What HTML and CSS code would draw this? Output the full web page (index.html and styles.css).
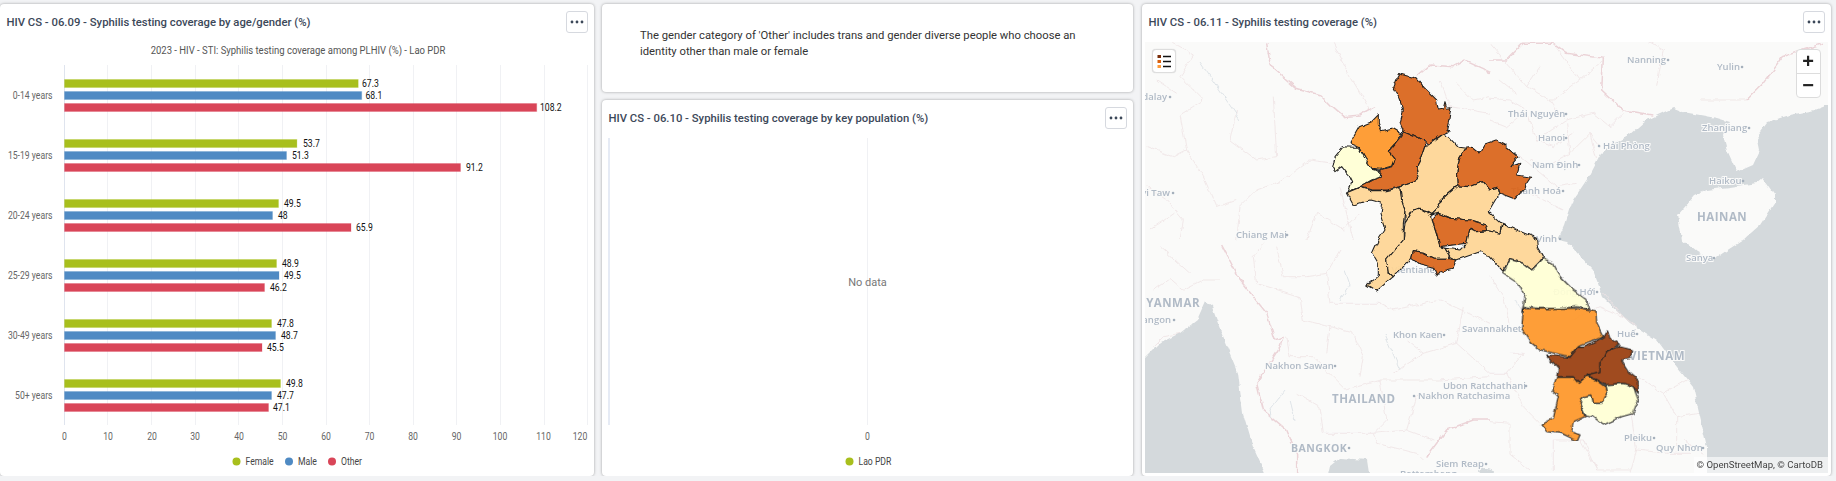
FILE: index.html
```html
<!DOCTYPE html>
<html lang="en">
<head>
    <meta charset="UTF-8">
    <title>HIV CS - Syphilis testing</title>
    <link rel="stylesheet" href="styles.css">
</head>
<body>
    <div class="dashboard">
        <!-- 06.09 bar chart -->
        <section class="card">
            <div class="card-header">
                <h3>HIV CS - 06.09 - Syphilis testing coverage by age/gender (%)</h3>
                <button class="menu-btn"><svg width="20" height="20" viewBox="0 0 20 20"><circle cx="5" cy="10" r="1.4"/><circle cx="10" cy="10" r="1.4"/><circle cx="15" cy="10" r="1.4"/></svg></button>
            </div>
            <svg class="chart" width="594" height="434" viewBox="0 42 594 434">
                <text class="chart-title" x="298" y="54" text-anchor="middle">2023 - HIV - STI: Syphilis testing coverage among PLHIV (%) - Lao PDR</text>
                <g class="grid">
                    <path d="M107.5 65V425M151.5 65V425M195.5 65V425M238.5 65V425M282.5 65V425M326.5 65V425M369.5 65V425M413.5 65V425M456.5 65V425M500.5 65V425M544.5 65V425M587.5 65V425"/>
                </g>
                <path class="axis" d="M64.5 65V425"/>
                <g class="bars">
                    <rect class="green" x="64.5" y="79.5" width="293.7" height="8"/>
                    <rect class="blue" x="64.5" y="91.5" width="297.2" height="8"/>
                    <rect class="red" x="64.5" y="103.5" width="472.2" height="8"/>
                    <rect class="green" x="64.5" y="139.5" width="232.4" height="8"/>
                    <rect class="blue" x="64.5" y="151.5" width="222" height="8"/>
                    <rect class="red" x="64.5" y="163.5" width="396" height="8"/>
                    <rect class="green" x="64.5" y="199.5" width="214" height="8"/>
                    <rect class="blue" x="64.5" y="211.5" width="208" height="8"/>
                    <rect class="red" x="64.5" y="223.5" width="286.5" height="8"/>
                    <rect class="green" x="64.5" y="259.5" width="212" height="8"/>
                    <rect class="blue" x="64.5" y="271.5" width="214.5" height="8"/>
                    <rect class="red" x="64.5" y="283.5" width="200" height="8"/>
                    <rect class="green" x="64.5" y="319.5" width="207" height="8"/>
                    <rect class="blue" x="64.5" y="331.5" width="211" height="8"/>
                    <rect class="red" x="64.5" y="343.5" width="197.5" height="8"/>
                    <rect class="green" x="64.5" y="379.5" width="216" height="8"/>
                    <rect class="blue" x="64.5" y="391.5" width="207" height="8"/>
                    <rect class="red" x="64.5" y="403.5" width="204" height="8"/>
                </g>
                <g class="data-labels">
                    <text x="362" y="87">67.3</text><text x="365.5" y="99">68.1</text><text x="540" y="111">108.2</text>
                    <text x="303" y="147">53.7</text><text x="292" y="159">51.3</text><text x="466" y="171">91.2</text>
                    <text x="284" y="207">49.5</text><text x="278" y="219">48</text><text x="356" y="231">65.9</text>
                    <text x="282" y="267">48.9</text><text x="284" y="279">49.5</text><text x="270" y="291">46.2</text>
                    <text x="277" y="327">47.8</text><text x="281" y="339">48.7</text><text x="267" y="351">45.5</text>
                    <text x="286" y="387">49.8</text><text x="277" y="399">47.7</text><text x="273" y="411">47.1</text>
                </g>
                <g class="cat-labels" text-anchor="end">
                    <text x="52.5" y="99">0-14 years</text>
                    <text x="52.5" y="159">15-19 years</text>
                    <text x="52.5" y="219">20-24 years</text>
                    <text x="52.5" y="279">25-29 years</text>
                    <text x="52.5" y="339">30-49 years</text>
                    <text x="52.5" y="399">50+ years</text>
                </g>
                <g class="tick-labels" text-anchor="middle">
                    <text x="64.5" y="440">0</text><text x="108" y="440">10</text><text x="152" y="440">20</text>
                    <text x="195" y="440">30</text><text x="239" y="440">40</text><text x="282.5" y="440">50</text>
                    <text x="326" y="440">60</text><text x="369.5" y="440">70</text><text x="413" y="440">80</text>
                    <text x="456.5" y="440">90</text><text x="500" y="440">100</text><text x="543.5" y="440">110</text>
                    <text x="580" y="440">120</text>
                </g>
                <g class="legend">
                    <circle class="green" cx="236.5" cy="461.5" r="4"/><text x="245.5" y="465">Female</text>
                    <circle class="blue" cx="289" cy="461.5" r="4"/><text x="298" y="465">Male</text>
                    <circle class="red" cx="332" cy="461.5" r="4"/><text x="341" y="465">Other</text>
                </g>
            </svg>
        </section>

        <div class="middle">
            <section class="card note">
                <p>The gender category of 'Other' includes trans and gender diverse people who choose an identity other than male or female</p>
            </section>
            <!-- 06.10 empty chart -->
            <section class="card grow">
                <div class="card-header">
                    <h3>HIV CS - 06.10 - Syphilis testing coverage by key population (%)</h3>
                    <button class="menu-btn"><svg width="20" height="20" viewBox="0 0 20 20"><circle cx="5" cy="10" r="1.4"/><circle cx="10" cy="10" r="1.4"/><circle cx="15" cy="10" r="1.4"/></svg></button>
                </div>
                <svg class="chart" width="531" height="338" viewBox="602 138 531 338">
                    <path class="grid-line" d="M867.5 138V425"/>
                    <path class="axis-wide" d="M609 138V425"/>
                    <text class="no-data" x="867.5" y="286" text-anchor="middle">No data</text>
                    <g class="tick-labels" text-anchor="middle"><text x="867.5" y="440">0</text></g>
                    <g class="legend">
                        <circle class="green" cx="849.5" cy="461.5" r="4"/><text x="858.5" y="465">Lao PDR</text>
                    </g>
                </svg>
            </section>
        </div>

        <!-- 06.11 map -->
        <section class="card card-map">
            <div class="card-header">
                <h3>HIV CS - 06.11 - Syphilis testing coverage (%)</h3>
                <button class="menu-btn"><svg width="20" height="20" viewBox="0 0 20 20"><circle cx="5" cy="10" r="1.4"/><circle cx="10" cy="10" r="1.4"/><circle cx="15" cy="10" r="1.4"/></svg></button>
            </div>
            <div class="map">
                <svg class="map-canvas" width="683" height="431" viewBox="1145 42 683 431">
                    <defs>
                        <filter id="rough" x="0" y="0" width="100%" height="100%" filterUnits="objectBoundingBox" color-interpolation-filters="sRGB">
                            <feTurbulence type="fractalNoise" baseFrequency="0.13" numOctaves="2" seed="4" result="noise"/>
                            <feDisplacementMap in="SourceGraphic" in2="noise" scale="5" xChannelSelector="R" yChannelSelector="G"/>
                        </filter>
                    </defs>
                    <g class="sea" filter="url(#rough)">
                        <path d="M1828 105L1815 110L1790 115L1767 122L1757 135L1760 150L1753 165L1737 172L1727 150L1723 135L1730 122L1717 118L1700 115L1683 112L1673 108L1647 120L1630 135L1603 150L1590 175L1573 200L1565 225L1558 240L1567 242L1593 270L1603 297L1630 323L1657 340L1677 367L1693 387L1700 417L1707 447L1707 480L1835 480L1835 105Z"/>
                        <path d="M1140 363L1160 343L1180 333L1197 320L1205 302L1212 307L1223 337L1238 373L1243 413L1253 447L1268 480L1140 480Z"/>
                        <path d="M1327 480L1330 466L1340 458L1367 460L1370 480Z"/>
                        <ellipse cx="1486" cy="472" rx="8" ry="4"/>
                        <path class="land" d="M1707 190L1730 187L1757 183L1763 178L1775 195L1775 202L1760 225L1743 240L1723 253L1713 260L1697 252L1682 240L1678 215L1695 195Z"/>
                    </g>
                    <g class="map-lines" filter="url(#rough)">
                        <g transform="translate(1140 0) scale(.3333)">
                            <path class="border" d="M380 130L390 190L400 205L470 265L540 285L575 320L610 350L660 345L705 320M830 230L870 195L940 200L975 180L1050 215"/>
                            <path d="M100 130L160 165L120 230L190 300L120 345L140 450L190 530M290 330L270 420L350 480L410 470L400 290M580 490L510 480L420 545L350 570L300 620L290 720M50 240L110 280M500 720L530 640L610 690L660 640M20 560L80 600L130 660L120 720M950 250L1000 300L1050 290M580 130L620 210L690 330M20 440L100 470L140 450M190 530L230 620L290 600M30 690L100 640M600 560L640 720M900 240L930 320L1050 340"/>
                        </g>
                        <g transform="translate(1490 0) scale(.3333)">
                            <path class="border" d="M0 180L50 180L100 130L190 130L230 160L340 175L335 270L400 330L490 345M770 300L820 250L880 170L1000 130"/>
                            <path d="M150 200L110 260L180 300L190 300L270 240L190 130M270 240L340 180M0 295L60 300L110 330L140 420L230 360L310 340L360 380L400 340M230 370L240 460L300 400L330 440M470 120L520 150L500 260M80 460L200 560L260 550M100 570L220 630M630 300L770 300M0 130L60 200L110 260M110 330L50 380L0 360M240 460L170 500L120 480M140 420L190 440L250 400M300 400L320 480M30 240L80 280M180 300L220 360"/>
                        </g>
                        <g transform="translate(1140 240) scale(.3333)">
                            <path class="border" d="M245 15L300 120L380 220L405 300L430 290L420 320L350 430L370 510L440 570L470 640L470 700M860 650L920 570L1000 540L1050 540"/>
                            <path d="M40 150L90 115L130 150L190 120M40 320L70 290L120 280M340 50L350 130L480 170L490 240L570 260L640 280L670 350M440 290L450 350L520 350L620 450L720 420L800 420M500 110L560 100L570 190L720 190L760 210L900 180L1050 250M540 500L550 580L700 580L800 570L880 600M800 300L850 340L760 400M470 460L540 500M720 420L740 540L700 580M410 20L430 110L500 110M560 100L600 30M60 20L150 100M240 120L190 120M670 350L660 410M850 340L950 310L1050 400M800 420L900 420L1050 410M800 570L830 470L930 460M700 580L710 610L830 640L850 660M570 260L560 340M380 0L340 50M950 310L970 200"/>
                        </g>
                        <g transform="translate(1490 240) scale(.3333)">
                            <path d="M0 110L40 170L60 250M60 340L100 340L50 400L100 500M0 545L60 550L60 640L120 690M190 600L190 690M270 600L320 690L420 690M420 500L440 630L420 698M450 410L520 460L590 420M520 460L560 530L630 520M560 530L560 620M250 240L330 200L400 230L440 260M0 400L50 400M100 500L150 550M320 690L280 600L190 600M60 250L0 280M340 160L400 230M440 630L530 640L600 640M580 600L640 640"/>
                        </g>
                        <path class="river" d="M1345 270L1350 285L1340 300M1285 390L1270 410L1272 420M1515 300L1525 320M1385 335L1400 370M1200 62L1240 120M1290 400L1295 420"/>
                    </g>
                    <g class="place-labels">
                        <text x="1167" y="100" text-anchor="end">Mandalay</text>
                        <text x="1170" y="196" text-anchor="end">Nay Pyi Taw</text>
                        <text x="1236" y="238">Chiang Mai</text>
                        <text x="1627" y="63">Nanning</text>
                        <text x="1717" y="70">Yulin</text>
                        <text x="1508" y="117">Thái Nguyên</text>
                        <text x="1538" y="141">Hanoi</text>
                        <text x="1603" y="149">Hải Phòng</text>
                        <text x="1532" y="168">Nam Định</text>
                        <text x="1561" y="194" text-anchor="end">Thanh Hoá</text>
                        <text x="1702" y="131">Zhanjiang</text>
                        <text x="1709" y="184">Haikou</text>
                        <text x="1557" y="242" text-anchor="end">Vinh</text>
                        <text x="1686" y="261">Sanya</text>
                        <text x="1553" y="295">Đồng Hới</text>
                        <text x="1617" y="337">Huế</text>
                        <text x="1624" y="441">Pleiku</text>
                        <text x="1656" y="451">Quy Nhơn</text>
                        <text x="1171" y="323" text-anchor="end">Yangon</text>
                        <text x="1435" y="273" text-anchor="end">Vientiane</text>
                        <text x="1393" y="338">Khon Kaen</text>
                        <text x="1462" y="332">Savannakhet</text>
                        <text x="1265" y="369">Nakhon Sawan</text>
                        <text x="1443" y="389">Ubon Ratchathani</text>
                        <text x="1418" y="399">Nakhon Ratchasima</text>
                        <text x="1436" y="467">Siem Reap</text>
                        <text x="1400" y="477">Battambang</text>
                        <text class="big" x="1697" y="221">HAINAN</text>
                        <text class="big" x="1685" y="360" text-anchor="end">VIETNAM</text>
                        <text class="big" x="1200" y="307" text-anchor="end">MYANMAR</text>
                        <text class="big" x="1332" y="403">THAILAND</text>
                        <text class="big city" x="1291" y="452">BANGKOK</text>
                    </g>
                    <path class="dots" d="M1170 97h.1M1173 193h.1M1287 235h.1M1668 60h.1M1742 67h.1M1566 114h.1M1566 138h.1M1599 146h.1M1579 165h.1M1563 191h.1M1749 128h.1M1743 181h.1M1560 239h.1M1714 258h.1M1597 292h.1M1637 334h.1M1654 438h.1M1703 448h.1M1174 320h.1M1444 335h.1M1335 366h.1M1526 386h.1M1414 396h.1M1349 448h.1M1486 464h.1"/>
                    <!-- provinces, traced at 3x then scaled down -->
                    <g filter="url(#rough)">
                    <g class="provinces" transform="translate(1300 60) scale(.3333)">
                        <path class="p-dark" d="M300 42L330 50L350 55L375 85L410 120L415 150L430 148L435 128L440 145L453 143L447 180L440 210L447 215L425 225L385 255L370 240L340 225L310 212L300 190L310 150L295 110L280 85L290 60Z"/>
                        <path class="p-dark" d="M310 212L340 225L370 240L375 255L360 300L350 320L357 350L330 370L300 380L260 390L215 390L180 380L215 360L240 352L243 330L275 320L283 295L265 275L285 250L302 230Z"/>
                        <path class="p-mid" d="M235 165L235 190L245 212L275 205L303 222L285 250L265 272L283 295L275 318L243 328L215 325L195 295L175 260L150 250L178 200L215 185Z"/>
                        <path class="p-pale" d="M130 260L160 262L175 262L195 295L215 325L243 332L240 352L215 360L180 380L145 395L155 365L145 345L125 320L105 335L98 325L105 290Z"/>
                        <path class="p-light" d="M140 398L180 382L215 392L260 392L300 382L305 420L315 450L310 490L310 540L260 600L265 635L280 650L230 693L200 675L235 650L235 610L217 580L235 540L255 510L240 460L245 430L210 420L160 435Z"/>
                        <path class="p-light" d="M430 222L447 232L475 262L497 265L480 290L470 340L472 378L440 405L412 430L415 445L395 465L360 445L340 450L315 490L315 450L305 420L300 382L330 370L357 350L350 320L360 300L375 255L385 255Z"/>
                        <path class="p-dark" d="M497 265L515 262L540 282L555 255L590 242L615 255L655 290L630 320L660 310L650 345L695 352L670 390L645 417L600 400L595 385L570 390L550 365L510 380L472 378L470 340L480 290Z"/>
                        <path class="p-light" d="M412 430L440 405L472 378L510 380L550 365L570 390L595 385L598 400L565 455L605 490L600 520L563 512L560 495L510 480L450 475L415 460L395 465L415 445Z"/>
                        <path class="p-light" d="M315 490L340 450L360 445L395 465L397 480L410 520L420 560L435 565L450 590L470 600L440 595L400 595L370 580L340 575L335 595L290 640L280 650L265 635L260 600L310 540Z"/>
                        <path class="p-dark" d="M397 480L415 460L450 475L510 480L560 495L563 512L530 515L510 505L500 550L420 560L410 520Z"/>
                        <path class="p-light" d="M500 550L510 505L530 515L563 512L600 520L607 490L650 510L710 535L712 560L730 590L720 605L695 630L670 610L630 598L610 635L570 590L540 575L470 600L450 590L435 565L480 570Z"/>
                        <path class="p-dark" d="M340 575L370 580L400 595L440 595L470 600L460 625L420 635L410 648L400 625L360 615L335 595Z"/>
                        <g transform="translate(570 540)">
                            <path class="p-pale" d="M60 58L100 70L125 90L150 65L160 55L190 70L210 110L250 150L290 180L300 210L260 200L210 205L150 205L105 200L95 220L105 170L85 130L40 100Z"/>
                            <path class="p-mid" d="M100 205L150 207L210 205L260 205L300 212L318 215L320 250L340 290L320 300L265 320L240 350L150 330L120 305L95 265Z"/>
                            <path class="p-brown" d="M170 345L240 352L265 322L280 322L320 305L345 290L352 272L360 295L388 315L350 335L330 370L330 395L290 405L265 430L250 410L200 410L205 385Z"/>
                            <path class="p-brown" d="M388 320L428 330L420 355L395 360L420 400L445 420L445 460L430 440L400 430L345 435L320 420L290 405L330 395L330 370L350 335Z"/>
                            <path class="p-mid" d="M200 412L250 412L265 430L290 408L320 422L345 440L350 460L335 490L310 490L305 465L280 470L270 490L285 530L250 545L245 575L270 585L262 603L215 580L170 575L153 555L190 535L205 470L185 450Z"/>
                            <path class="p-pale" d="M345 435L400 430L430 440L445 480L430 520L395 530L340 555L310 530L285 525L270 490L280 470L305 465L310 490L335 490L350 460Z"/>
                        </g>
                    </g>
                    </g>
                </svg>
                <button class="map-legend-btn"><svg width="20" height="20" viewBox="0 0 20 20">
                    <rect x="3.5" y="4" width="3.5" height="3" fill="#7b2e0a"/>
                    <rect x="3.5" y="9" width="3.5" height="3" fill="#d9600f"/>
                    <rect x="3.5" y="14" width="3.5" height="3" fill="#fd9a3a"/>
                    <path d="M9 5.5h8M9 10.5h8M9 15.5h8" stroke="#111" stroke-width="1.4"/>
                </svg></button>
                <div class="zoom-bar">
                    <a>+</a>
                    <a>−</a>
                </div>
                <div class="attribution">© OpenStreetMap, © CartoDB</div>
            </div>
        </section>
    </div>
</body>
</html>
```

FILE: styles.css
```css
body {
    margin: 0;
    background: #f2f3f5;
    font-family: 'Roboto', 'Liberation Sans', sans-serif;
    overflow: hidden;
}

.dashboard {
    display: grid;
    grid-template-columns: 594px 531px 690px;
    column-gap: 8px;
    height: 472px;
    padding-top: 4px;
}

.card {
    background: white;
    border-radius: 4px;
    box-shadow: 0 0 3px rgba(0,0,0,0.35);
    display: flex;
    flex-direction: column;
    overflow: hidden;
}

.card-map {
    margin-left: 1px;
}

.card-header {
    display: flex;
    justify-content: space-between;
    align-items: flex-start;
    height: 38px;
    padding: 7px 6px 0 6.5px;
    box-sizing: border-box;
}

.card-header h3 {
    margin: 5px 0 0;
    font-size: 11.3px;
    line-height: 14px;
    font-weight: 500;
    color: #3c4859;
}

.menu-btn {
    width: 22px;
    height: 22px;
    padding: 0;
    background: white;
    border: 1px solid #d6d9df;
    border-radius: 3px;
}

.menu-btn svg {
    display: block;
    fill: #3c4859;
}

.chart {
    display: block;
}

.middle {
    display: flex;
    flex-direction: column;
    gap: 8px;
    min-height: 0;
}

.note {
    height: 88px;
    padding: 24px 38px 0;
    box-sizing: border-box;
    flex: none;
}

.note p {
    margin: 0;
    font-size: 11.25px;
    line-height: 16px;
    color: #333;
}

.grow {
    flex: 1;
}

/* chart parts, text is a bit narrow on this dashboard */
.chart-title, .data-labels text, .cat-labels text, .tick-labels text, .legend text {
    transform-box: fill-box;
    transform: scaleX(0.865);
}

.chart-title {
    font-size: 11px;
    fill: #555;
    transform-origin: 50% 50%;
}

.grid path, .grid-line {
    stroke: #f0f1f4;
    stroke-width: 1;
    fill: none;
}

.axis {
    stroke: #dfe4ee;
    stroke-width: 1;
    fill: none;
}

.axis-wide {
    stroke: #e6ebf5;
    stroke-width: 2;
    fill: none;
}

.bars rect {
    stroke-width: 1;
    stroke-opacity: 0.25;
}

.green { fill: #a8bf1d; stroke: #a8bf1d; }
.blue { fill: #4f8ac3; stroke: #4f8ac3; }
.red { fill: #d94558; stroke: #d94558; }

.legend circle { stroke: none; }

.data-labels text {
    font-size: 10px;
    font-weight: 400;
    fill: #111;
    transform-origin: 0 50%;
}

.cat-labels text {
    font-size: 10px;
    fill: #666;
    transform-origin: 100% 50%;
}

.tick-labels text {
    font-size: 10px;
    fill: #666;
    transform-origin: 50% 50%;
}

.legend text {
    font-size: 10px;
    fill: #444;
    transform-origin: 0 50%;
}

.no-data {
    font-size: 11px;
    fill: #777;
}

/* map */
.map {
    position: relative;
    margin: 0 3px;
    width: 683px;
    height: 431px;
    overflow: hidden;
}

.map-canvas {
    display: block;
    background: #fafaf9;
}

.sea path, .sea ellipse {
    fill: #d4d9dc;
}

.sea path.land {
    fill: #fafaf9;
}

.map-lines path {
    fill: none;
    stroke: #efe3e5;
    stroke-width: 2.4;
}

.map-lines path.border {
    stroke: #ebd3d7;
    stroke-width: 4.5;
}

.map-lines path.river {
    stroke: #dfe4e8;
    stroke-width: 1;
}

.place-labels {
    filter: blur(0.3px);
}

.place-labels text {
    font-family: 'Open Sans', sans-serif;
    font-size: 9.5px;
    font-weight: 600;
    fill: #b0bac6;
    stroke: #fafaf9;
    stroke-width: 2px;
    paint-order: stroke;
}

.place-labels text.big {
    font-size: 11.5px;
    font-weight: 700;
    letter-spacing: 0.5px;
}

.place-labels text.city {
    font-size: 10.5px;
}

.dots {
    stroke: #a5b0bc;
    stroke-width: 2.5;
    stroke-linecap: round;
    fill: none;
}

.provinces path {
    stroke: #222;
    stroke-width: 3.2;
    stroke-linejoin: round;
    fill-opacity: 0.93;
}

.p-dark { fill: #d9641a; }
.p-mid { fill: #fe9729; }
.p-light { fill: #fed594; }
.p-pale { fill: #ffffd4; }
.p-brown { fill: #993d0e; }

.map-legend-btn {
    position: absolute;
    top: 7px;
    left: 7px;
    width: 24px;
    height: 24px;
    padding: 0;
    background: white;
    border: 1px solid #ddd;
    border-radius: 4px;
    box-shadow: 0 0 1px rgba(0,0,0,0.2);
}

.map-legend-btn svg {
    display: block;
    margin: 1px;
}

.zoom-bar {
    position: absolute;
    top: 7px;
    right: 7.5px;
    width: 23px;
    background: white;
    border: 1px solid #dcdcdc;
    border-radius: 4px;
}

.zoom-bar a {
    display: block;
    height: 23px;
    line-height: 23px;
    text-align: center;
    font-family: 'Liberation Sans', sans-serif;
    font-size: 20px;
    font-weight: bold;
    color: #222;
}

.zoom-bar a + a {
    border-top: 1px solid #ddd;
}

.attribution {
    position: absolute;
    right: 0;
    bottom: 0;
    padding: 0 5px 0 2px;
    height: 16px;
    line-height: 16px;
    font-size: 9.6px;
    color: #444;
    background: rgba(255,255,255,0.6);
}
```
